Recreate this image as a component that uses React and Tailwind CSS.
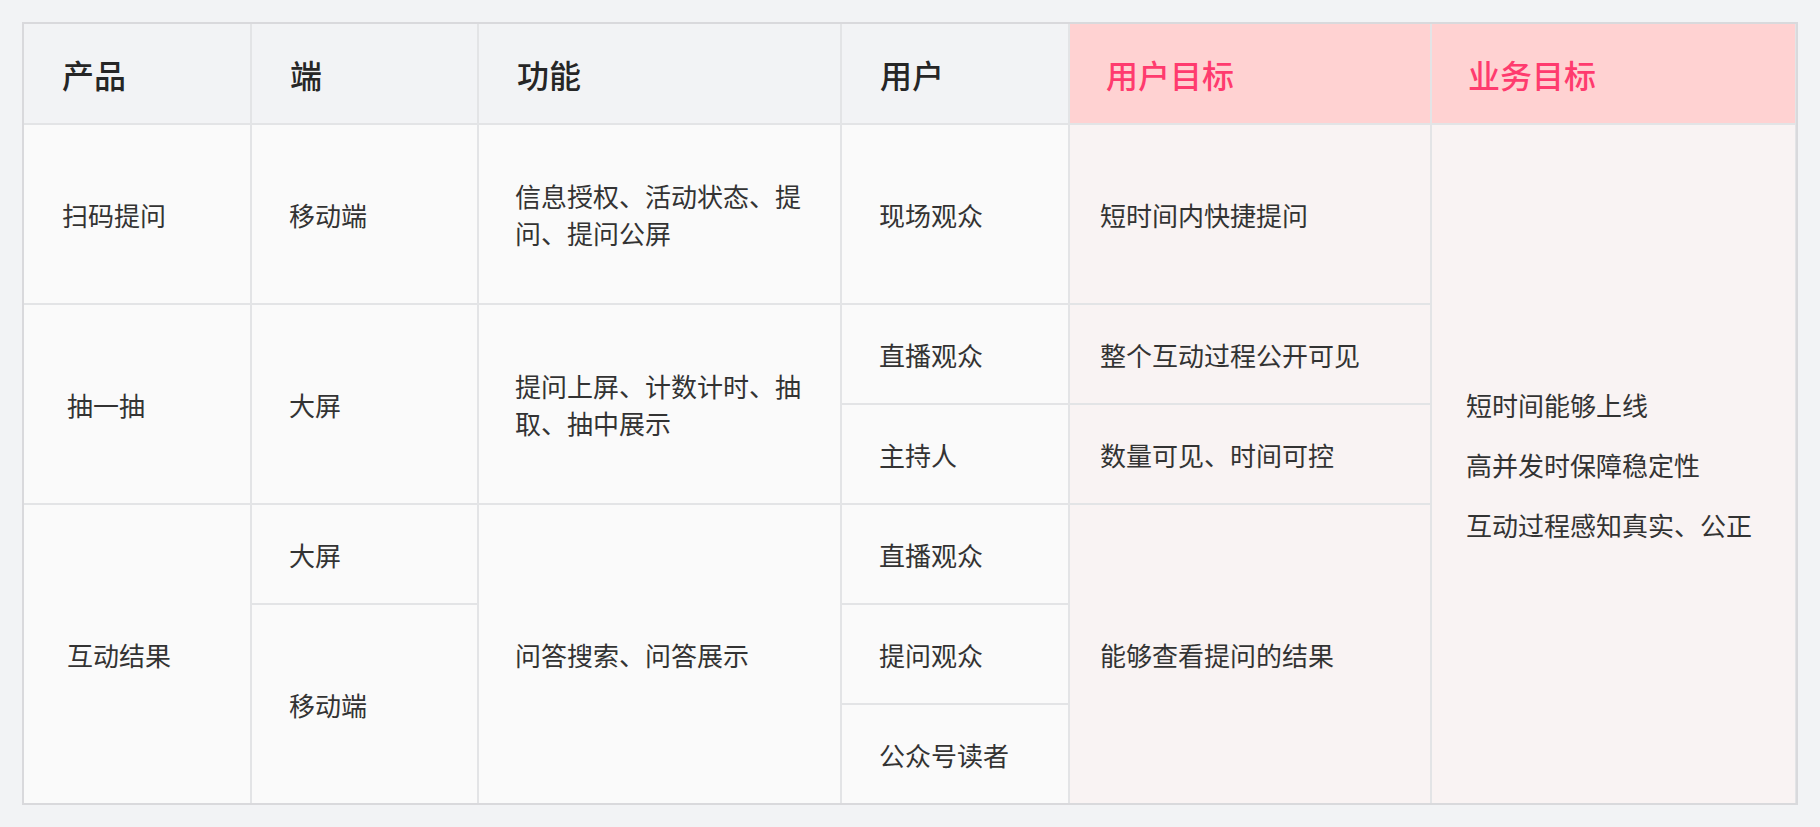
const font = { fontFamily: '"Noto Sans CJK SC", "Noto Sans", sans-serif' }

// one body cell: grid position and left padding are passed in as full class names
function Cell({ className = '', pink = false, children }) {
  return (
    <div
      className={`flex items-center pr-[36px] text-[26px] leading-[37px] text-[#333333] ${
        pink ? 'bg-[#f9f3f3]' : 'bg-[#fafafa]'
      } ${className}`}
    >
      <div>{children}</div>
    </div>
  )
}

function Head({ className = '', pink = false, children }) {
  return (
    <div
      className={`flex items-center text-[32px] font-medium ${
        pink ? 'pl-[36px] bg-[#ffd2d2] text-[#ff3b6e]' : 'pl-[38px] bg-[#f2f3f5] text-[#262626]'
      } ${className}`}
    >
      {children}
    </div>
  )
}

export default function App() {
  return (
    <div className="min-h-[827px] bg-[#f2f3f5] p-[22px]" style={font}>
      <div className="grid grid-cols-[226px_225px_361px_226px_360px_363px] grid-rows-[99px_178px_98px_98px_98px_98px_98px] gap-[2px] bg-[#e3e4e6] border-2 border-[#d9d9dc]">
        <Head className="col-start-1 row-start-1">产品</Head>
        <Head className="col-start-2 row-start-1">端</Head>
        <Head className="col-start-3 row-start-1">功能</Head>
        <Head className="col-start-4 row-start-1">用户</Head>
        <Head className="col-start-5 row-start-1" pink>用户目标</Head>
        <Head className="col-start-6 row-start-1" pink>业务目标</Head>

        {/* 扫码提问 */}
        <Cell className="col-start-1 row-start-2 pl-[38px]">扫码提问</Cell>
        <Cell className="col-start-2 row-start-2 pl-[37px]">移动端</Cell>
        <Cell className="col-start-3 row-start-2 pl-[36px]">信息授权、活动状态、提问、提问公屏</Cell>
        <Cell className="col-start-4 row-start-2 pl-[37px]">现场观众</Cell>
        <Cell className="col-start-5 row-start-2 pl-[30px]" pink>短时间内快捷提问</Cell>

        {/* 业务目标 spans every body row */}
        <div className="col-start-6 row-start-2 row-span-6 flex flex-col justify-center gap-[23px] bg-[#f9f3f3] pl-[34px] text-[26px] leading-[37px] text-[#333333]">
          <div>短时间能够上线</div>
          <div>高并发时保障稳定性</div>
          <div>互动过程感知真实、公正</div>
        </div>

        {/* 抽一抽 */}
        <Cell className="col-start-1 row-start-3 row-span-2 pl-[43px]">抽一抽</Cell>
        <Cell className="col-start-2 row-start-3 row-span-2 pl-[37px]">大屏</Cell>
        <Cell className="col-start-3 row-start-3 row-span-2 pl-[36px]">提问上屏、计数计时、抽取、抽中展示</Cell>
        <Cell className="col-start-4 row-start-3 pl-[37px]">直播观众</Cell>
        <Cell className="col-start-5 row-start-3 pl-[30px]" pink>整个互动过程公开可见</Cell>
        <Cell className="col-start-4 row-start-4 pl-[37px]">主持人</Cell>
        <Cell className="col-start-5 row-start-4 pl-[30px]" pink>数量可见、时间可控</Cell>

        {/* 互动结果 */}
        <Cell className="col-start-1 row-start-5 row-span-3 pl-[43px]">互动结果</Cell>
        <Cell className="col-start-2 row-start-5 pl-[37px]">大屏</Cell>
        <Cell className="col-start-2 row-start-6 row-span-2 pl-[37px]">移动端</Cell>
        <Cell className="col-start-3 row-start-5 row-span-3 pl-[36px]">问答搜索、问答展示</Cell>
        <Cell className="col-start-4 row-start-5 pl-[37px]">直播观众</Cell>
        <Cell className="col-start-4 row-start-6 pl-[37px]">提问观众</Cell>
        <Cell className="col-start-4 row-start-7 pl-[37px]">公众号读者</Cell>
        <Cell className="col-start-5 row-start-5 row-span-3 pl-[30px]" pink>能够查看提问的结果</Cell>
      </div>
    </div>
  )
}
